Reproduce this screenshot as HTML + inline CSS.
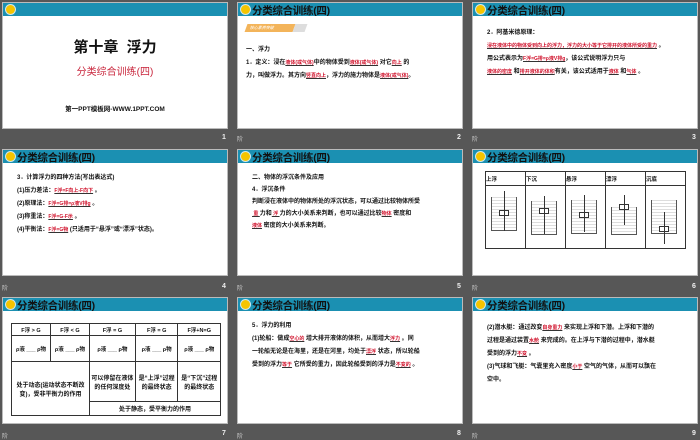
<!DOCTYPE html>
<html><head><meta charset="utf-8"><style>
*{margin:0;padding:0;box-sizing:border-box}
body{width:700px;height:438px;background:#575757;position:relative;overflow:hidden;font-family:"Liberation Sans","Noto Sans CJK SC",sans-serif;color:#111}
.s{position:absolute;width:226px;height:127px;background:#fff;border:1px solid #bbb;overflow:hidden}
.h{position:absolute;left:0;top:0;width:100%;height:13px;background:#1b90b2}
.dot{position:absolute;left:3px;top:2px;width:9px;height:9px;border-radius:50%;background:#f5c400;box-shadow:0 0 0 1px #cfe8ef}
.t{position:absolute;left:14px;top:0px;font-size:10.5px;font-weight:bold;color:#111;white-space:nowrap;letter-spacing:-0.3px}
.n{position:absolute;font-size:7px;color:#eee;font-weight:bold}
.m{position:absolute;font-size:6px;color:#ccc}
.c{position:absolute;font-size:6px;font-weight:bold;white-space:nowrap;line-height:9px;left:14px}
.r{color:#d0102a;text-decoration:underline;text-decoration-color:#333;font-size:5px}
table{border-collapse:collapse;position:absolute}
td{border:1px solid #333;font-size:5.5px;font-weight:bold;text-align:center;vertical-align:middle;padding:0}
.box{position:absolute;width:26px;height:34px;border:1px solid #555;border-top:none;background:repeating-linear-gradient(0deg,#fff 0 2px,#ddd 2px 3px)}
.blk{position:absolute;width:10px;height:6px;border:1px solid #333;background:#fff}
.ar{position:absolute;width:1px;background:#333}
</style></head><body>

<!-- slide 1 -->
<div class="s" style="left:2px;top:2px"><div class="h"><div class="dot"></div></div>
<div style="position:absolute;top:33px;width:100%;text-align:center;font-size:15px;font-weight:bold">第十章&nbsp; 浮力</div>
<div style="position:absolute;top:60px;width:100%;text-align:center;font-size:10px;color:#c8233a">分类综合训练(四)</div>
<div style="position:absolute;top:100px;width:100%;text-align:center;font-size:6.5px;font-weight:bold">第一PPT模板网-WWW.1PPT.COM</div>
</div>
<div class="n" style="left:222px;top:134px">1</div>

<!-- slide 2 -->
<div class="s" style="left:237px;top:2px"><div class="h"><div class="dot"></div><div class="t">分类综合训练(四)</div></div>
<div style="position:absolute;left:8px;top:21px;width:48px;height:8px;background:#f3b45a;transform:skewX(-20deg);font-size:4px;color:#fff;padding-left:4px;line-height:8px">核心素养突破</div>
<div style="position:absolute;left:56px;top:21px;width:12px;height:8px;background:#ddd;transform:skewX(-20deg)"></div>
<div class="c" style="left:8px;top:43px">一、浮力</div>
<div class="c" style="left:8px;top:56px">1．定义：浸在<span class="r">液体(或气体)</span>中的物体受到<span class="r">液体(或气体)</span>&nbsp;对它<span class="r">向上</span>&nbsp;的</div>
<div class="c" style="left:8px;top:69px">力，叫做浮力。其方向<span class="r">竖直向上</span>，浮力的施力物体是<span class="r">液体(或气体)</span>。</div>
</div>
<div class="m" style="left:237px;top:134px">阶</div><div class="n" style="left:457px;top:134px">2</div>

<!-- slide 3 -->
<div class="s" style="left:472px;top:2px"><div class="h"><div class="dot"></div><div class="t">分类综合训练(四)</div></div>
<div class="c" style="top:26px">2．阿基米德原理：</div>
<div class="c" style="top:39px"><span class="r">浸在液体中的物体受到向上的浮力，浮力的大小等于它排开的液体所受的重力</span>&nbsp;。</div>
<div class="c" style="top:52px">用公式表示为<span class="r">F浮=G排=ρ液V排g</span>，该公式说明浮力只与</div>
<div class="c" style="top:65px"><span class="r">液体的密度</span>&nbsp;和<span class="r">排开液体的体积</span>有关，该公式适用于<span class="r">液体</span>&nbsp;和<span class="r">气体</span>&nbsp;。</div>
</div>
<div class="m" style="left:472px;top:134px">阶</div><div class="n" style="left:692px;top:134px">3</div>

<!-- slide 4 -->
<div class="s" style="left:2px;top:149px"><div class="h"><div class="dot"></div><div class="t">分类综合训练(四)</div></div>
<div class="c" style="top:24px">3．计算浮力的四种方法(写出表达式)</div>
<div class="c" style="top:37px">(1)压力差法：<span class="r">F浮=F向上-F向下</span>&nbsp;。</div>
<div class="c" style="top:50px">(2)原理法：<span class="r">F浮=G排=ρ液V排g</span>&nbsp;。</div>
<div class="c" style="top:63px">(3)称重法：<span class="r">F浮=G-F示</span>&nbsp;。</div>
<div class="c" style="top:76px">(4)平衡法：<span class="r">F浮=G物</span>&nbsp;(只适用于“悬浮”或“漂浮”状态)。</div>
</div>
<div class="m" style="left:2px;top:283px">阶</div><div class="n" style="left:222px;top:283px">4</div>

<!-- slide 5 -->
<div class="s" style="left:237px;top:149px"><div class="h"><div class="dot"></div><div class="t">分类综合训练(四)</div></div>
<div class="c" style="top:24px">二、物体的浮沉条件及应用</div>
<div class="c" style="top:36px">4．浮沉条件</div>
<div class="c" style="top:48px">判断浸在液体中的物体所处的浮沉状态，可以通过比较物体所受</div>
<div class="c" style="top:60px"><span class="r">&nbsp;重&nbsp;</span>力和<span class="r">&nbsp;浮&nbsp;</span>力的大小关系来判断，也可以通过比较<span class="r">物体</span>&nbsp;密度和</div>
<div class="c" style="top:72px"><span class="r">液体</span>&nbsp;密度的大小关系来判断。</div>
</div>
<div class="m" style="left:237px;top:283px">阶</div><div class="n" style="left:457px;top:283px">5</div>

<!-- slide 6 -->
<div class="s" style="left:472px;top:149px"><div class="h"><div class="dot"></div><div class="t">分类综合训练(四)</div></div>
<table style="left:12px;top:21px;width:201px;height:78px">
<tr style="height:14px"><td style="text-align:left">上浮</td><td style="text-align:left">下沉</td><td style="text-align:left">悬浮</td><td style="text-align:left">漂浮</td><td style="text-align:left">沉底</td></tr>
<tr><td></td><td></td><td></td><td></td><td></td></tr></table>
<div class="box" style="left:18px;top:47px"></div><div class="blk" style="left:26px;top:60px"></div><div class="ar" style="left:31px;top:41px;height:40px"></div>
<div class="box" style="left:58px;top:51px"></div><div class="blk" style="left:66px;top:58px"></div><div class="ar" style="left:71px;top:46px;height:38px"></div>
<div class="box" style="left:98px;top:50px"></div><div class="blk" style="left:106px;top:62px"></div><div class="ar" style="left:111px;top:45px;height:37px"></div>
<div class="box" style="left:138px;top:57px;height:28px"></div><div class="blk" style="left:146px;top:54px"></div><div class="ar" style="left:151px;top:45px;height:30px"></div>
<div class="box" style="left:178px;top:50px"></div><div class="blk" style="left:186px;top:76px"></div><div class="ar" style="left:191px;top:62px;height:32px"></div>
</div>
<div class="m" style="left:472px;top:283px">阶</div><div class="n" style="left:692px;top:283px">6</div>

<!-- slide 7 -->
<div class="s" style="left:2px;top:297px"><div class="h"><div class="dot"></div><div class="t">分类综合训练(四)</div></div>
<table style="left:8px;top:25px;width:210px;height:92px">
<tr style="height:12px"><td>F浮 &gt; G</td><td>F浮 &lt; G</td><td>F浮 = G</td><td>F浮 = G</td><td>F浮+N=G</td></tr>
<tr style="height:26px"><td>ρ液 ___ ρ物</td><td>ρ液 ___ ρ物</td><td>ρ液 ___ ρ物</td><td>ρ液 ___ ρ物</td><td>ρ液 ___ ρ物</td></tr>
<tr style="height:40px"><td colspan="2" rowspan="2" style="font-size:6px">处于动态(运动状态不断改变)，受非平衡力的作用</td><td style="font-size:6px">可以停留在液体的任何深度处</td><td style="font-size:6px">是“上浮”过程的最终状态</td><td style="font-size:6px">是“下沉”过程的最终状态</td></tr>
<tr style="height:14px"><td colspan="3" style="font-size:6px">处于静态，受平衡力的作用</td></tr></table>
</div>
<div class="m" style="left:2px;top:431px">阶</div><div class="n" style="left:222px;top:430px">7</div>

<!-- slide 8 -->
<div class="s" style="left:237px;top:297px"><div class="h"><div class="dot"></div><div class="t">分类综合训练(四)</div></div>
<div class="c" style="top:24px">5．浮力的利用</div>
<div class="c" style="top:37px">(1)轮船：做成<span class="r">空心的</span>&nbsp;增大排开液体的体积，从而增大<span class="r">浮力</span>&nbsp;。同</div>
<div class="c" style="top:50px">一轮船无论是在海里，还是在河里，均处于<span class="r">漂浮</span>&nbsp;状态，所以轮船</div>
<div class="c" style="top:63px">受到的浮力<span class="r">等于</span>&nbsp;它所受的重力，因此轮船受到的浮力是<span class="r">不变的</span>&nbsp;。</div>
</div>
<div class="m" style="left:237px;top:431px">阶</div><div class="n" style="left:457px;top:430px">8</div>

<!-- slide 9 -->
<div class="s" style="left:472px;top:297px"><div class="h"><div class="dot"></div><div class="t">分类综合训练(四)</div></div>
<div class="c" style="top:26px">(2)潜水艇：通过改变<span class="r">自身重力</span>&nbsp;来实现上浮和下潜。上浮和下潜的</div>
<div class="c" style="top:39px">过程是通过装置<span class="r">水舱</span>&nbsp;来完成的。在上浮与下潜的过程中，潜水艇</div>
<div class="c" style="top:52px">受到的浮力<span class="r">不变</span>&nbsp;。</div>
<div class="c" style="top:65px">(3)气球和飞艇：气囊里充入密度<span class="r">小于</span>&nbsp;空气的气体，从而可以飘在</div>
<div class="c" style="top:78px">空中。</div>
</div>
<div class="m" style="left:472px;top:431px">阶</div><div class="n" style="left:692px;top:430px">9</div>

</body></html>
